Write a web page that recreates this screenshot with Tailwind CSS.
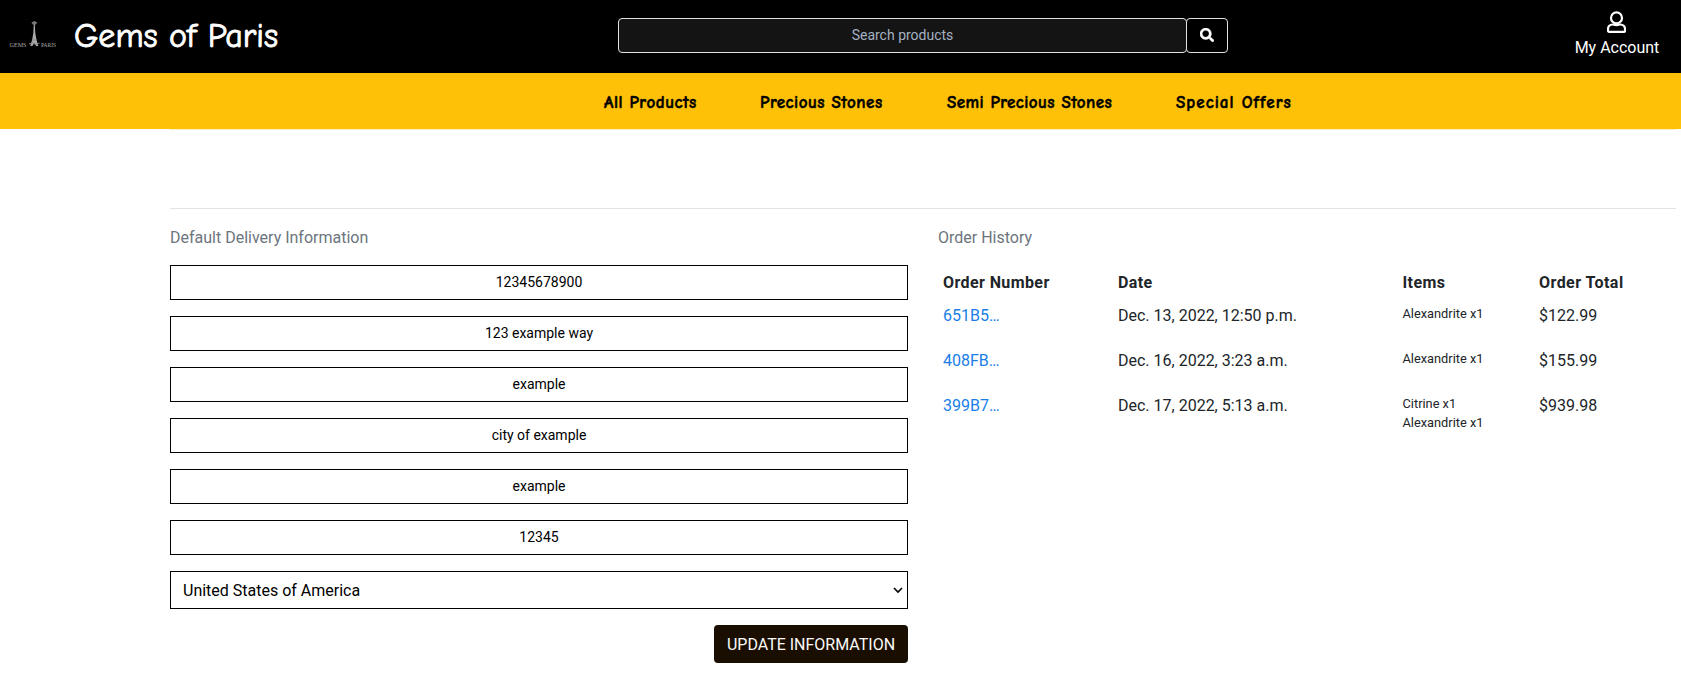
<!DOCTYPE html>
<html lang="en">
<head>
<meta charset="utf-8">
<title>Gems of Paris</title>
<script src="https://cdn.jsdelivr.net/npm/@tailwindcss/browser@4"></script>
</head>
<body class="h-[690px] overflow-hidden bg-white font-['Roboto',sans-serif] text-base leading-6 text-[#212529]">
<header class="flex h-[73px] items-start bg-black text-white">
  <a href="#" class="ml-[9px] flex h-[73px] w-[609px] shrink-0 items-center">
    <svg class="mt-[-5px] h-7 w-12 shrink-0" viewBox="0 0 48 28" fill="#aaa">
      <path d="M22.400 2.500L25.300 1l3 1.500-1.500 2h-3z" fill="#777"/>
      <path d="M24.800 4h1l.5 9 1.200 7 1.800 6h-2.100l-1.900-3-1.900 3h-2.100l1.800-6 1.200-7z"/>
      <path d="M20 24l4-1.500 2.500 2 4-1.500M22.800 20h5" stroke="#888" fill="none"/>
      <text x="0.500" y="26.500" font-family="Liberation Serif, serif" font-size="7" textLength="17" lengthAdjust="spacingAndGlyphs">GEMS</text>
      <text x="32" y="26.500" font-family="Liberation Serif, serif" font-size="7" textLength="15" lengthAdjust="spacingAndGlyphs">PARIS</text>
    </svg>
    <span class="mb-0.5 ml-[17px] whitespace-nowrap font-['Comic_Sans_MS','Comic_Neue',Lato,sans-serif] text-[34px] leading-10 [-webkit-text-stroke:0.9px_white]">Gems of Paris</span>
  </a>
  <form class="mt-[18px] flex h-[35px] w-[610px] shrink-0">
    <input class="w-[569px] rounded-[4px] border border-[#dee2e6] bg-[#141414] px-2 pb-0.5 text-center text-sm placeholder:text-[#a5b1c2]" placeholder="Search products">
    <button type="button" class="-ml-px flex w-[42px] items-center justify-center rounded-[4px] border border-[#dee2e6] bg-black pb-0.5">
      <svg class="size-3.5" viewBox="0 0 512 512" fill="white" stroke="white" stroke-width="18"><path d="M505 442.700L405.300 343c-4.500-4.500-10.600-7-17-7H372c27.600-35.300 44-79.700 44-128C416 93.100 322.900 0 208 0S0 93.100 0 208s93.100 208 208 208c48.300 0 92.700-16.400 128-44v16.300c0 6.400 2.500 12.500 7 17l99.700 99.700c9.400 9.400 24.600 9.400 33.900 0l28.300-28.300c9.400-9.400 9.400-24.600.1-34zM208 336c-70.700 0-128-57.200-128-128 0-70.700 57.200-128 128-128 70.700 0 128 57.200 128 128 0 70.700-57.200 128-128 128z"/></svg>
    </button>
  </form>
  <a href="#" class="ml-auto mr-[22px] flex w-[84px] flex-col items-center pt-[11px]">
    <svg class="-ml-0.5 h-[22px] w-[19px]" viewBox="0 0 19 22" fill="none" stroke="white" stroke-width="2.200"><circle cx="9.500" cy="6.900" r="5.500"/><path d="M5.600 13.500h.8c2 .9 4.200.9 6.200 0h.8c2.700 0 4.600 2 4.600 4.600v1.700c0 .6-.5 1.100-1.100 1.100H2.100c-.6 0-1.100-.5-1.100-1.100v-1.700c0-2.600 1.900-4.600 4.600-4.600z"/></svg>
    <span class="mt-[3px] whitespace-nowrap">My Account</span>
  </a>
</header>
<nav class="flex h-14 whitespace-nowrap bg-[#ffc107] pt-[18px] font-['Comic_Sans_MS','Comic_Neue',Lato,sans-serif] text-[17px] font-black tracking-[0.5px] text-black [-webkit-text-stroke:0.5px_black]">
  <a href="#" class="ml-[604px] w-[156px]">All Products</a>
  <a href="#" class="w-[187px]">Precious Stones</a>
  <a href="#" class="w-[229px] tracking-[0.43px]">Semi Precious Stones</a>
  <a href="#" class="tracking-[1.050px]">Special Offers</a>
</nav>
<main class="ml-[170px] mr-[5px]">
  <div class="h-px bg-[#fff0c0]"></div>
  <hr class="mt-[78px] border-[#e3e4e5]">
  <div class="flex">
    <section class="w-[738px] pt-[17px]">
      <p class="text-[#6c757d]">Default Delivery Information</p>
      <form class="mt-[15px] flex flex-col gap-4 text-black">
        <input class="h-[35px] border border-black pb-0.5 text-center text-sm" value="12345678900">
        <input class="h-[35px] border border-black pb-0.5 text-center text-sm" value="123 example way">
        <input class="h-[35px] border border-black pb-0.5 text-center text-sm" value="example">
        <input class="h-[35px] border border-black pb-0.5 text-center text-sm" value="city of example">
        <input class="h-[35px] border border-black pb-0.5 text-center text-sm" value="example">
        <input class="h-[35px] border border-black pb-0.5 text-center text-sm" value="12345">
        <div class="flex h-[38px] items-center justify-between border border-black pl-3 pr-1">
          <span class="pt-0.5">United States of America</span>
          <svg class="h-2 w-2.5" viewBox="0 0 10 8" fill="none" stroke="black" stroke-width="1.600"><path d="M1 2l4 4 4-4"/></svg>
        </div>
        <button type="button" class="h-[38px] w-[194px] self-end whitespace-nowrap rounded-[4px] bg-[#1a0e00] pt-0.5 text-[#fafafa]">UPDATE INFORMATION</button>
      </form>
    </section>
    <section class="ml-[30px] pt-[17px]">
      <p class="text-[#6c757d]">Order History</p>
      <div class="mt-[21px] grid grid-cols-[175px_284.500px_136.500px_120px] pl-[5px]">
        <b class="h-[33px] tracking-[0.4px]">Order Number</b><b class="tracking-[0.4px]">Date</b><b class="tracking-[0.4px]">Items</b><b class="tracking-[0.45px]">Order Total</b>
        <a href="#" class="h-[45px] text-[#1a7ee6]">651B5…</a><span>Dec. 13, 2022, 12:50 p.m.</span><span class="text-[12.800px] leading-[19px]">Alexandrite x1</span><span>$122.99</span>
        <a href="#" class="h-[45px] text-[#1a7ee6]">408FB…</a><span>Dec. 16, 2022, 3:23 a.m.</span><span class="text-[12.800px] leading-[19px]">Alexandrite x1</span><span>$155.99</span>
        <a href="#" class="h-[45px] text-[#1a7ee6]">399B7…</a><span>Dec. 17, 2022, 5:13 a.m.</span><span class="text-[12.800px] leading-[19px]">Citrine x1<br>Alexandrite x1</span><span>$939.98</span>
      </div>
    </section>
  </div>
</main>
</body>
</html>
